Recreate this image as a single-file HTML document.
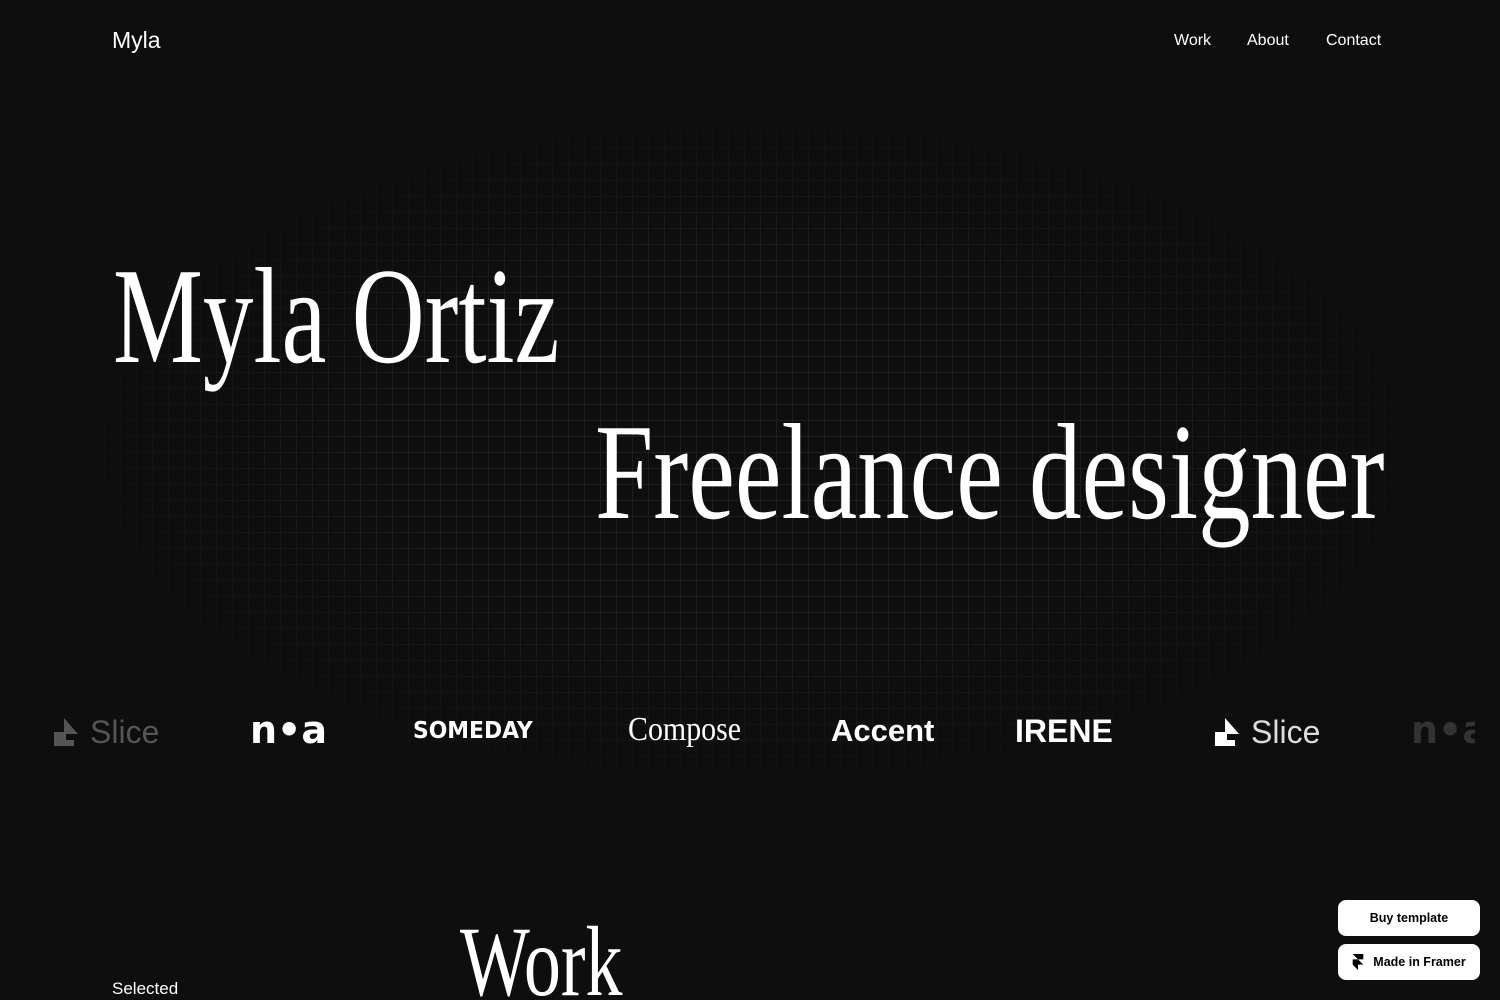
<!DOCTYPE html>
<html><head><meta charset="utf-8"><style>
*{margin:0;padding:0;box-sizing:border-box}
html,body{width:1500px;height:1000px;overflow:hidden}
body{background:#0e0e0e;color:#fff;font-family:"Liberation Sans",sans-serif;position:relative}
.grid{position:absolute;left:0;top:80px;width:1500px;height:740px;
background-image:linear-gradient(#1e1e1e 1px,transparent 1px),linear-gradient(90deg,#1e1e1e 1px,transparent 1px);background-size:16px 16px;background-position:8px 4px;
-webkit-mask-image:radial-gradient(ellipse 740px 370px at 750px 370px,#000 50%,transparent 100%);mask-image:radial-gradient(ellipse 740px 370px at 750px 370px,#000 50%,transparent 100%)}
.a{position:absolute;white-space:nowrap}
.nav{font-size:16px;top:32px}
.serif{font-family:"Liberation Serif",serif;transform-origin:0 0;line-height:1}
.logo{font-size:30px;font-weight:bold;top:714px}
.btn{position:absolute;left:1338px;width:142px;height:36px;background:#fff;border-radius:8px;color:#000;font-size:12.5px;font-weight:bold;display:flex;align-items:center;justify-content:center}
</style></head><body>
<div class="grid"></div>
<div class="a" style="left:112px;top:27px;font-size:23px">Myla</div>
<div class="a nav" style="left:1174px">Work</div>
<div class="a nav" style="left:1247px">About</div>
<div class="a nav" style="left:1326px">Contact</div>
<div class="a serif" style="left:113px;top:248px;font-size:137px;transform:scaleX(0.738)">Myla Ortiz</div>
<div class="a serif" style="left:595px;top:404px;font-size:137px;transform:scaleX(0.766)">Freelance designer</div>

<div class="a" style="left:54px;top:714px;font-size:32px;color:#555;display:flex;align-items:center"><svg width="28" height="30" viewBox="0 0 28 30" style="margin-right:8px"><path d="M10 0l14 16H10zM0 14h12v8h8v6H0z" fill="#555"/></svg>Slice</div>
<div class="a logo" style="left:250px;top:708px;font-size:38px;font-family:'DejaVu Sans',sans-serif">n•a</div>
<div class="a logo" style="left:413px;top:718px;font-size:23px;font-family:'DejaVu Sans',sans-serif;transform:scaleX(0.95);transform-origin:0 0">SOMEDAY</div>
<div class="a serif" style="left:628px;top:713px;font-size:34px;transform:scaleX(0.88)">Compose</div>
<div class="a" style="left:831px;top:713px;font-size:31px;font-weight:bold">Accent</div>
<div class="a" style="left:1015px;top:713px;font-size:32px;font-weight:bold;width:114px;overflow:hidden">IRENE</div>
<div class="a" style="left:1215px;top:714px;font-size:32px;color:#ddd;display:flex;align-items:center"><svg width="28" height="30" viewBox="0 0 28 30" style="margin-right:8px"><path d="M10 0l14 16H10zM0 14h12v8h8v6H0z" fill="#fff"/></svg>Slice</div>
<div class="a" style="left:1411px;top:708px;font-size:38px;font-weight:bold;color:#333;width:64px;overflow:hidden;font-family:'DejaVu Sans',sans-serif">n•a</div>

<div class="a serif" style="left:460px;top:912px;font-size:100px;transform:scaleX(0.74)">Work</div>
<div class="a" style="left:112px;top:979px;font-size:17px">Selected</div>
<div class="btn" style="top:900px">Buy template</div>
<div class="btn" style="top:944px"><svg width="12" height="16" viewBox="0 0 12 18" style="margin-right:9px"><path d="M0 0h12v6H6zM0 6h6l6 6H6v6L0 12z" fill="#000"/></svg>Made in Framer</div>
</body></html>
